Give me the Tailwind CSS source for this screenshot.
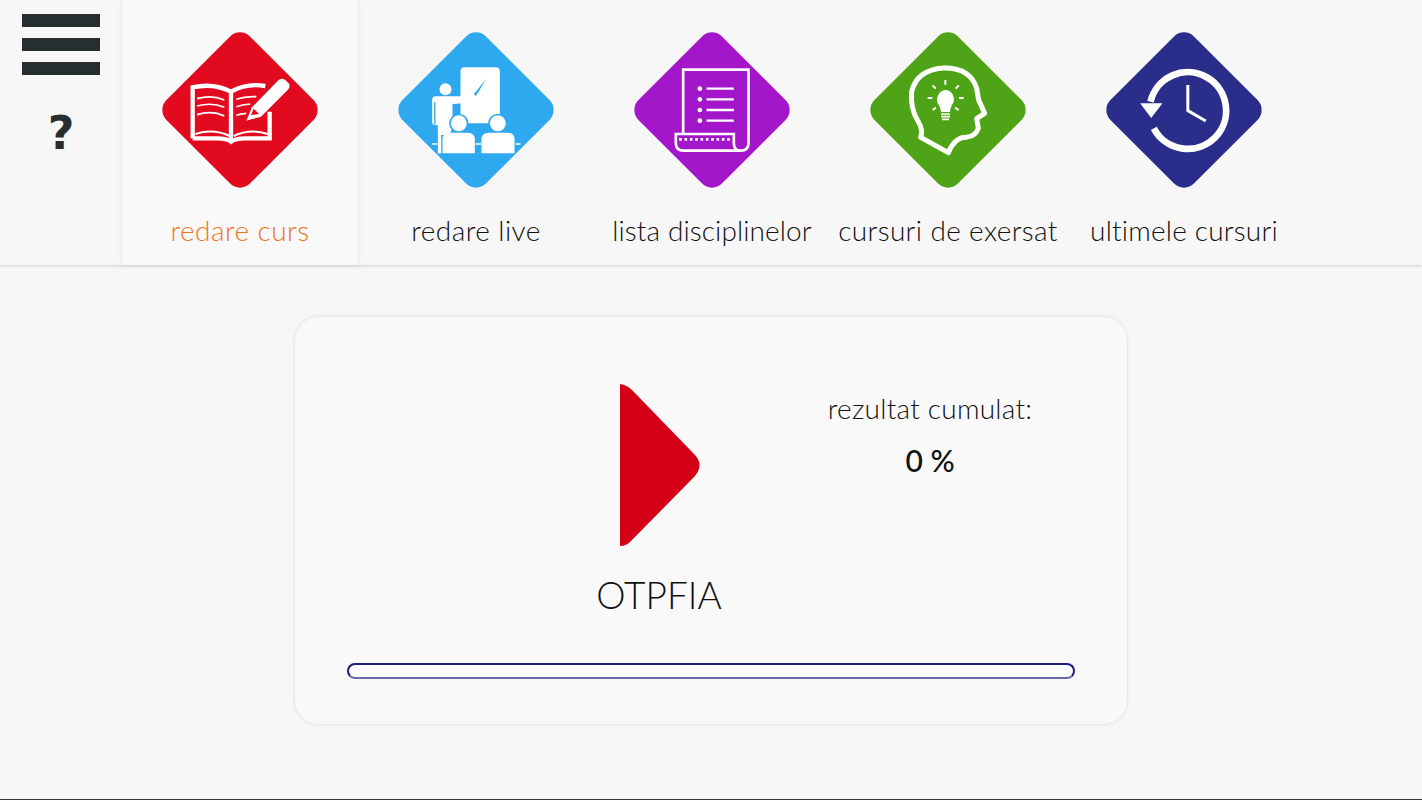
<!DOCTYPE html>
<html lang="en">
<head>
    <meta charset="UTF-8">
    <meta name="viewport" content="width=device-width, initial-scale=1.0">
    <title>Redare curs</title>
    <script src="https://cdn.jsdelivr.net/npm/@tailwindcss/browser@4"></script>
</head>
<body class="bg-[#f7f7f7] font-['Lato',sans-serif] text-[#111]">
<div class="h-[800px] w-[1422px] flex flex-col overflow-hidden border-b border-[#33383a]">

    <!-- Top navigation -->
    <header class="h-[265px] flex shrink-0 shadow-[0_1px_3px_rgba(0,0,0,0.16)]">
        <div class="w-[122px] flex flex-col">
            <div class="ml-[22px] mt-[14px] w-[78px] flex flex-col gap-[11px]">
                <div class="h-[13px] bg-[#262e30]"></div>
                <div class="h-[13px] bg-[#262e30]"></div>
                <div class="h-[13px] bg-[#262e30]"></div>
            </div>
            <div class="mt-[30px] text-center text-[46px] leading-[56px] font-bold font-['DejaVu_Sans',sans-serif] text-[#262e30]">?</div>
        </div>

        <!-- redare curs (selected) -->
        <div class="w-[236px] flex flex-col items-center pt-[30px] bg-[#f9f9f9] shadow-[0_0_5px_rgba(0,0,0,0.09)]">
            <svg width="160" height="160" viewBox="479 90 480 480">
                <rect x="542" y="153" width="354" height="354" rx="42" transform="rotate(45 719 330)" fill="#e10a1e"/>
                <g fill="none" stroke="#fff" stroke-width="13">
                    <path d="M577 415V262Q640 248 692 275Q740 248 795 258"/>
                    <path d="M692 275V420"/>
                    <path d="M577 415H650Q680 415 692 425Q705 415 735 415H808V335"/>
                    <path d="M585 402Q640 385 688 408M700 408Q750 385 802 402" stroke-width="6"/>
                </g>
                <g fill="none" stroke="#fff" stroke-width="5">
                    <path d="M590 296Q635 284 672 300M590 318Q635 306 672 322M590 344Q635 330 672 348"/>
                    <path d="M708 298Q735 288 768 290M708 320Q725 314 750 312M708 346Q720 342 738 340"/>
                </g>
                <path d="M738 362L755 322L835 240Q845 232 855 240L865 250Q872 260 862 270L782 350Z" fill="#fff"/>
                <path d="M752 345L760 326L776 342Z" fill="#e10a1e"/>
            </svg>
            <div class="mt-[22px] text-[28px] leading-[36px] font-light tracking-[0.45px] text-[#f2741a]">redare curs</div>
        </div>

        <!-- redare live -->
        <div class="w-[236px] flex flex-col items-center pt-[30px]">
            <svg width="160" height="160" viewBox="46.5 30 480 480">
                <rect x="109.5" y="93" width="354" height="354" rx="42" transform="rotate(45 286.5 270)" fill="#2ea8ee"/>
                <rect x="240" y="142" width="118" height="168" rx="12" fill="#fff"/>
                <path d="M280 222L318 176L286 228Z" fill="#2ea8ee"/>
                <circle cx="195" cy="208" r="18" fill="#fff"/>
                <path d="M165 229H272Q282 232 280 242Q278 248 270 248L216 252V325L206 345H172V316H165Q155 316 155 306V240Q155 230 165 229Z" fill="#fff"/>
                <path d="M163 246V314" stroke="#2ea8ee" stroke-width="4"/>
                <circle cx="235" cy="310" r="29" fill="#2ea8ee"/>
                <circle cx="352" cy="310" r="29" fill="#2ea8ee"/>
                <circle cx="235" cy="310" r="24" fill="#fff"/>
                <circle cx="352" cy="310" r="24" fill="#fff"/>
                <path d="M172 345V400H182V345Z" fill="#fff"/>
                <path d="M186 400V358Q186 338 210 338H262Q283 338 283 358V400Z" fill="#fff"/>
                <path d="M303 400V358Q303 338 325 338H380Q402 338 402 358V400Z" fill="#fff"/>
                <path d="M155 372H170M285 372H302M405 372H420" stroke="#fff" stroke-width="5"/>
            </svg>
            <div class="mt-[22px] text-[28px] leading-[36px] font-light tracking-[0.45px]">redare live</div>
        </div>

        <!-- lista disciplinelor -->
        <div class="w-[236px] flex flex-col items-center pt-[30px]">
            <svg width="160" height="160" viewBox="34.5 30 480 480">
                <rect x="97.5" y="93" width="354" height="354" rx="42" transform="rotate(45 274.5 270)" fill="#a316c9"/>
                <g fill="none" stroke="#fff" stroke-width="8">
                    <path d="M188 340V149H384V370Q384 392 360 392Q340 392 340 370V342H166V370Q166 392 190 392H360"/>
                    <path d="M258 206H340M258 238H340M258 270H340M258 302H340" stroke-width="7"/>
                    <path d="M176 358H330" stroke-width="8" stroke-dasharray="8 8"/>
                </g>
                <g fill="#fff">
                    <circle cx="238" cy="206" r="7"/>
                    <circle cx="238" cy="238" r="7"/>
                    <circle cx="238" cy="270" r="7"/>
                    <circle cx="238" cy="302" r="7"/>
                </g>
            </svg>
            <div class="mt-[22px] text-[28px] leading-[36px] font-light tracking-[0.1px]">lista disciplinelor</div>
        </div>

        <!-- cursuri de exersat -->
        <div class="w-[236px] flex flex-col items-center pt-[30px]">
            <svg width="160" height="160" viewBox="24 30 480 480">
                <rect x="87" y="93" width="354" height="354" rx="42" transform="rotate(45 264 270)" fill="#4fa316"/>
                <path d="M182 352Q190 330 175 305Q150 265 155 215Q170 150 250 144Q330 142 350 205L356 240L374 280L350 296L355 325Q348 348 320 352Q285 350 265 398Z" fill="none" stroke="#fff" stroke-width="15" stroke-linejoin="round"/>
                <path d="M243 276Q243 264 236 254Q228 243 233 228Q241 210 257 210Q274 211 280 228Q285 243 276 254Q270 264 270 276Z" fill="#fff"/>
                <path d="M243 282H270M243 290H270M246 298H267" stroke="#fff" stroke-width="5"/>
                <path d="M256 180V194M218 196L227 206M296 196L287 206M203 234H217M297 234H311M218 270L228 263M296 270L285 263" stroke="#fff" stroke-width="6"/>
            </svg>
            <div class="mt-[22px] text-[28px] leading-[36px] font-light tracking-[0.35px]">cursuri de exersat</div>
        </div>

        <!-- ultimele cursuri -->
        <div class="w-[236px] flex flex-col items-center pt-[30px]">
            <svg width="160" height="160" viewBox="40.5 30 480 480">
                <rect x="103.5" y="93" width="354" height="354" rx="42" transform="rotate(45 280.5 270)" fill="#2a2d8a"/>
                <path d="M190 325A115 115 0 1 0 180 245" fill="none" stroke="#fff" stroke-width="20"/>
                <path d="M149 250H216L182 294Z" fill="#fff"/>
                <path d="M292 195V272L346 303" fill="none" stroke="#fff" stroke-width="9" stroke-linejoin="round"/>
            </svg>
            <div class="mt-[22px] text-[28px] leading-[36px] font-light tracking-[0.2px]">ultimele cursuri</div>
        </div>
    </header>

    <!-- Course card -->
    <main class="flex justify-center pt-[52px]">
        <section class="w-[832px] h-[407px] px-[52px] pt-[67px] rounded-[24px] bg-[#f9f9f9] shadow-[0_0_4px_rgba(0,0,0,0.12)] flex flex-col">
            <div class="flex h-[279px]">
                <div class="ml-[182px] w-[260px] flex flex-col items-center">
                    <svg class="ml-[2px]" width="80" height="163" viewBox="620 384 80 163">
                        <path d="M620 384Q627 385 632 390L695 455Q704 465 695 476L632 540Q627 546 620 546Z" fill="#d30018"/>
                    </svg>
                    <div class="mt-[26px] text-[37px] leading-[44px] font-light">OTPFIA</div>
                </div>
                <div class="ml-[38px] w-[206px] pt-[6px] flex flex-col items-center">
                    <div class="text-[28px] leading-[36px] font-light tracking-[0.25px] whitespace-nowrap">rezultat cumulat:</div>
                    <div class="mt-[16px] text-[30px] leading-[36px] font-medium">0 %</div>
                </div>
            </div>
            <div class="h-[16px] rounded-[8px] border-2 border-[#1c1c7c] border-b-[#6a6aa8] bg-[#fbfbfb]"></div>
        </section>
    </main>
</div>
</body>
</html>
